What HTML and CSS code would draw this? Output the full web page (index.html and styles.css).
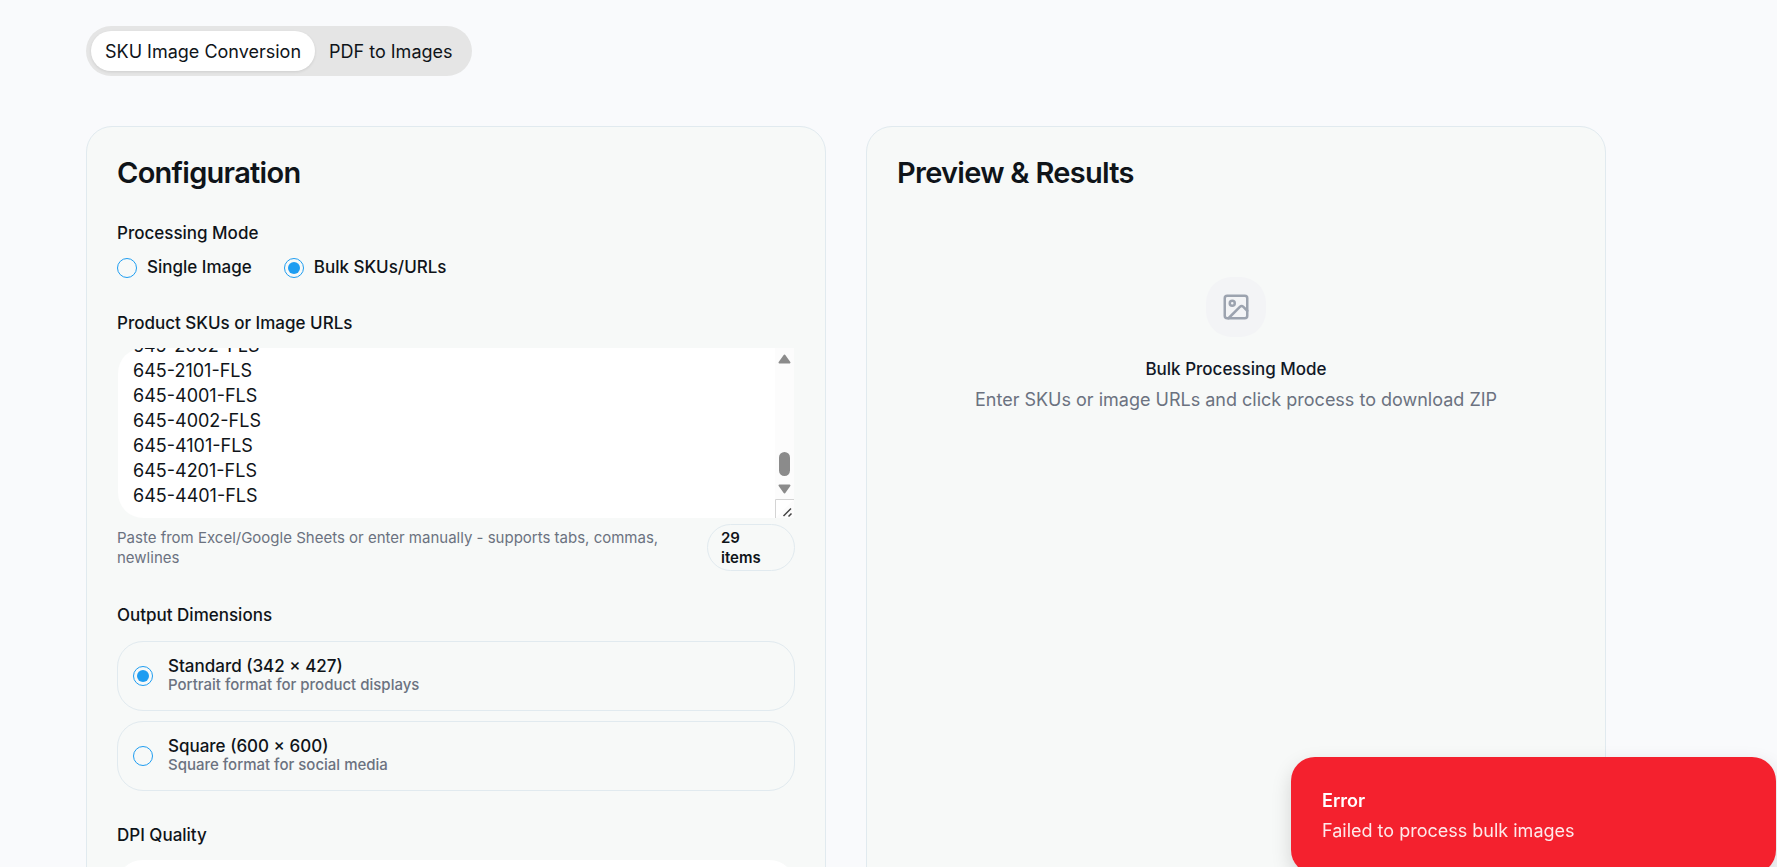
FILE: index.html
```html
<!DOCTYPE html>
<html lang="en">
<head>
<meta charset="utf-8">
<meta name="viewport" content="width=device-width, initial-scale=1">
<title>SKU Image Conversion</title>
<link rel="stylesheet" href="styles.css">
</head>
<body>
<main class="page">
  <div class="tabs" role="tablist">
    <button class="tab tab-active" type="button" role="tab" aria-selected="true">SKU Image Conversion</button>
    <button class="tab" type="button" role="tab" aria-selected="false">PDF to Images</button>
  </div>
  <div class="columns">
    <section class="card">
      <h2 class="card-title">Configuration</h2>
      <form class="form">
        <fieldset class="group">
          <legend class="label">Processing Mode</legend>
          <div class="mode-row">
            <label class="mode"><input class="radio" type="radio" name="mode">Single Image</label>
            <label class="mode"><input class="radio" type="radio" name="mode" checked>Bulk SKUs/URLs</label>
          </div>
        </fieldset>
        <div class="group">
          <label class="label" for="skus">Product SKUs or Image URLs</label>
          <div class="skus-box">
            <textarea class="skus" id="skus" spellcheck="false">545-0101-FLS
545-0102-FLS
545-0201-FLS
545-0202-FLS
545-0301-FLS
545-0302-FLS
545-0401-FLS
545-0402-FLS
545-1001-FLS
545-1002-FLS
545-1101-FLS
545-1102-FLS
545-1201-FLS
545-1202-FLS
545-1301-FLS
545-1302-FLS
545-1401-FLS
545-1402-FLS
545-1501-FLS
545-1502-FLS
545-1601-FLS
545-2001-FLS
545-2002-FLS
645-2101-FLS
645-4001-FLS
645-4002-FLS
645-4101-FLS
645-4201-FLS
645-4401-FLS</textarea>
            <svg class="scrollbar" width="19" height="170" viewBox="0 0 19 170" aria-hidden="true">
              <rect width="19" height="170" fill="#fcfcfc"/>
              <g fill="#8b8b8b" stroke="#8b8b8b" stroke-width="2" stroke-linejoin="round">
                <path d="M9.500 7.500 14.500 14.500H4.500z"/>
                <path d="M9.500 144.500 14.500 137.500H4.500z"/>
              </g>
              <rect x="4" y="104" width="11" height="24" rx="5.500" fill="#8b8b8b"/>
              <path d="M.5 170V151.500H19" fill="#fff" stroke="#d4d4d4"/>
              <path d="M8.500 168 16 160.500M13.500 168.500 16.500 165.500" stroke="#444" stroke-width="1.500"/>
            </svg>
          </div>
          <div class="hint-row">
            <p class="hint">Paste from Excel/Google Sheets or enter manually - supports tabs, commas, newlines</p>
            <span class="badge">29 items</span>
          </div>
        </div>
        <fieldset class="group">
          <legend class="label">Output Dimensions</legend>
          <div class="options">
            <label class="option">
              <input class="radio" type="radio" name="size" checked>
              <span class="option-text"><span class="option-name">Standard (342 × 427)</span><span class="option-note">Portrait format for product displays</span></span>
            </label>
            <label class="option">
              <input class="radio" type="radio" name="size">
              <span class="option-text"><span class="option-name">Square (600 × 600)</span><span class="option-note">Square format for social media</span></span>
            </label>
          </div>
        </fieldset>
        <div class="group">
          <label class="label" for="dpi">DPI Quality</label>
          <select class="select" id="dpi"><option>300 DPI</option></select>
        </div>
      </form>
    </section>
    <section class="card">
      <h2 class="card-title">Preview &amp; Results</h2>
      <div class="empty">
        <div class="empty-icon">
          <svg width="30" height="30" viewBox="0 0 24 24" fill="none" stroke="currentColor" stroke-width="2" stroke-linecap="round" stroke-linejoin="round" aria-hidden="true"><rect x="3" y="3" width="18" height="18" rx="2" ry="2"/><circle cx="9" cy="9" r="2"/><path d="m21 15-3.086-3.086a2 2 0 0 0-2.828 0L6 21"/></svg>
        </div>
        <p class="empty-title">Bulk Processing Mode</p>
        <p class="empty-note">Enter SKUs or image URLs and click process to download ZIP</p>
      </div>
    </section>
  </div>
</main>
<div class="toast" role="alert">
  <p class="toast-title">Error</p>
  <p class="toast-note">Failed to process bulk images</p>
</div>
<script src="script.js"></script>
</body>
</html>
```
FILE: styles.css
```css
* { box-sizing: border-box; }
html { height: 100%; }
body {
  margin: 0;
  height: 100%;
  overflow: hidden;
  background: #f9fafc;
  color: #0f1419;
  font-family: Inter, "Liberation Sans", sans-serif;
  font-size: 17px;
  line-height: 25px;
}
p, h2, fieldset { margin: 0; }
fieldset { border: 0; padding: 0; min-width: 0; }
legend { padding: 0; }
button, textarea, select { font: inherit; color: inherit; }

.page { padding: 26px 171px 40px 86px; }
.tabs {
  display: inline-flex;
  padding: 5px;
  border-radius: 25px;
  background: #e5e5e5;
}
.tab {
  height: 40px;
  padding: 0 14px;
  border: 0;
  border-radius: 20px;
  background: transparent;
  font-size: 18px;
  font-weight: 400;
}
.tab-active { background: #fff; box-shadow: 0 1px 3px rgba(0, 0, 0, .1); }

.columns {
  display: grid;
  grid-template-columns: 1fr 1fr;
  gap: 40px;
  margin-top: 50px;
}
.card {
  min-width: 0;
  padding: 30px;
  border: 1px solid #e1eaef;
  border-radius: 26px;
  background: #f7f9f8;
}
.card-title {
  font-size: 29px;
  line-height: 32px;
  font-weight: 600;
  letter-spacing: -0.025em;
}
.form {
  display: flex;
  flex-direction: column;
  gap: 30px;
  margin-top: 30px;
}
.group { display: flex; flex-direction: column; }
.label { font-weight: 500; line-height: 28px; }
.mode-row { display: flex; gap: 32px; margin-top: 9px; }
.mode { display: flex; align-items: center; gap: 10px; line-height: 23px; font-weight: 500; }
.radio {
  appearance: none;
  flex: none;
  display: grid;
  place-items: center;
  width: 20px;
  height: 20px;
  margin: 0;
  border: 1px solid #1e9df1;
  border-radius: 50%;
}
.radio:checked::before {
  content: "";
  width: 12px;
  height: 12px;
  border-radius: 50%;
  background: #1e9df1;
}
.skus-box { position: relative; display: grid; margin-top: 10px; }
.skus {
  height: 172px;
  padding: 10px 15px;
  border: 1px solid #f7f9f8;
  border-radius: 26px 0 0 26px;
  background: #fff;
  font-size: 18px;
  resize: none;
  outline: 0;
}
.scrollbar { position: absolute; top: 1px; right: 1px; }
.hint-row {
  display: flex;
  justify-content: space-between;
  gap: 30px;
  margin-top: 5px;
  font-size: 15px;
  line-height: 20px;
}
.hint { flex: 1; padding-top: 4px; color: #6b7280; }
.badge {
  width: 88px;
  padding: 3px 30px 2px 13px;
  border: 1px solid #e1eaef;
  border-radius: 24px;
  font-weight: 600;
}
.options { display: flex; flex-direction: column; gap: 10px; margin-top: 12px; }
.option {
  display: flex;
  align-items: center;
  gap: 15px;
  padding: 15px;
  border: 1px solid #e1eaef;
  border-radius: 26px;
}
.option-text { display: flex; flex-direction: column; font-weight: 500; }
.option-name { line-height: 18px; }
.option-note { font-size: 15px; line-height: 20px; color: #6b7280; }
.select {
  appearance: none;
  height: 50px;
  margin-top: 10px;
  padding: 0 15px;
  border: 1px solid #f7f9f8;
  border-radius: 26px;
  background: #fff;
}

.empty {
  display: flex;
  flex-direction: column;
  align-items: center;
  padding-top: 88px;
  text-align: center;
}
.empty-icon {
  display: grid;
  place-items: center;
  width: 60px;
  height: 60px;
  border-radius: 26px;
  background: #f3f4f6;
  color: #9ca3af;
}
.empty-title { margin-top: 20px; font-weight: 500; color: #111827; }
.empty-note { margin-top: 5px; font-size: 18px; color: #6b7280; }

.toast {
  position: fixed;
  right: 1px;
  bottom: -7px;
  width: 485px;
  padding: 31px;
  border-radius: 24px;
  background: #f4212e;
  color: #fff;
  font-size: 18px;
  box-shadow: 0 8px 20px rgba(0, 0, 0, .15);
}
.toast-title { font-weight: 600; }
.toast-note { margin-top: 5px; opacity: .9; }
```
FILE: script.js
```js
const skus = document.getElementById("skus");
skus.scrollTop = skus.scrollHeight;
```
